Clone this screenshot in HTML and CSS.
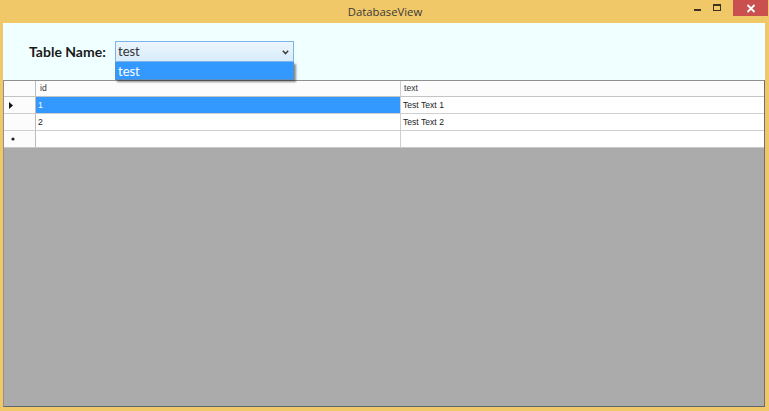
FILE: index.html
```html
<!DOCTYPE html>
<html>
<head>
<meta charset="utf-8">
<link rel="stylesheet" href="styles.css">
</head>
<body>
<div class="window">
  <div class="titlebar">
    <div class="title">DatabaseView</div>
    <div class="controls">
      <div class="btn-min"><span class="min-bar"></span></div>
      <div class="btn-max"><span class="max-box"></span></div>
      <div class="btn-close">
        <svg width="10" height="9" viewBox="0 0 10 9"><path d="M1.5 1 L8.5 8 M8.5 1 L1.5 8" stroke="#fff" stroke-width="1.8"/></svg>
      </div>
    </div>
  </div>
  <div class="client">
    <div class="toolbar">
      <span class="label">Table Name:</span>
      <div class="combo-wrap">
        <div class="combo">
          <span class="combo-text">test</span>
          <svg class="chev" width="7" height="5" viewBox="0 0 7 5"><path d="M0.8 0.8 L3.5 3.6 L6.2 0.8" stroke="#404040" stroke-width="1.5" fill="none"/></svg>
        </div>
        <div class="droplist"><span class="drop-item">test</span></div>
      </div>
    </div>
    <div class="grid">
      <div class="rows">
        <div class="cell rh hdr"></div>
        <div class="cell hdr ch1">id</div>
        <div class="cell hdr ch2">text</div>

        <div class="cell rh"><svg width="4" height="7" viewBox="0 0 4 7"><path d="M0 0 L4 3.5 L0 7 Z" fill="#111"/></svg></div>
        <div class="cell sel">1</div>
        <div class="cell">Test Text 1</div>

        <div class="cell rh"></div>
        <div class="cell">2</div>
        <div class="cell">Test Text 2</div>

        <div class="cell rh last"><svg class="star" width="4" height="4" viewBox="0 0 4 4"><circle cx="2" cy="2" r="1.6" fill="#222"/></svg></div>
        <div class="cell last"></div>
        <div class="cell last"></div>
      </div>
    </div>
  </div>
</div>
</body>
</html>
```

FILE: styles.css
```css
* { box-sizing: border-box; }
html, body { margin: 0; padding: 0; }
body { width: 769px; height: 411px; overflow: hidden; background: #f1c868; }

.window {
  width: 769px;
  height: 411px;
  display: flex;
  flex-direction: column;
  background: #f1c868;
  padding: 0 4px 4px 3px;
}

.titlebar {
  height: 23px;
  flex: none;
  position: relative;
  display: flex;
  justify-content: center;
}
.title {
  font-family: "Open Sans", "Noto Sans", sans-serif;
  font-size: 11.3px;
  color: #3a3a3a;
  line-height: 23px;
  padding-left: 2px;
}
.controls {
  position: absolute;
  right: -3px;
  top: 0;
  display: flex;
  align-items: flex-start;
}
.btn-min {
  width: 20px;
  height: 15px;
  display: flex;
  justify-content: center;
  margin-right: 0;
}
.min-bar {
  display: block;
  width: 7px;
  height: 2px;
  background: #3b3220;
  margin-top: 9px;
}
.btn-max {
  width: 20px;
  height: 15px;
  display: flex;
  justify-content: center;
  margin-right: 6px;
}
.max-box {
  display: block;
  width: 8px;
  height: 7px;
  border: 1px solid #3b3220;
  border-top-width: 2px;
  margin-top: 4px;
}
.btn-close {
  width: 35px;
  height: 16px;
  background: #c9504f;
  display: flex;
  align-items: center;
  justify-content: center;
}

.client {
  flex: 1;
  display: flex;
  flex-direction: column;
  background: #f0ffff;
}

.toolbar {
  height: 57px;
  flex: none;
  display: flex;
  align-items: flex-start;
  padding: 18px 0 0 26px;
}
.label {
  font-family: Lato, "Open Sans", sans-serif;
  font-weight: bold;
  font-size: 14px;
  color: #1a1a1a;
  line-height: 21px;
  margin-top: 0;
  width: 86px;
}
.combo-wrap {
  position: relative;
  width: 179px;
  height: 21px;
}
.combo {
  width: 179px;
  height: 21px;
  border: 1px solid #7eb4ea;
  background: linear-gradient(#ecf6fd, #d8ecfa);
  display: flex;
  align-items: center;
  justify-content: space-between;
  padding: 0 4px 0 2px;
}
.combo-text {
  font-family: Lato, "Open Sans", sans-serif;
  font-size: 13px;
  color: #333;
  line-height: 19px;
  margin-top: -1px;
}
.chev { margin-top: 1px; }
.droplist {
  position: absolute;
  left: 0;
  top: 21px;
  width: 179px;
  height: 18px;
  background: #3399ff;
  border: 1px solid #5a8fc8;
  border-top: none;
  box-shadow: 2px 2px 2px rgba(0, 0, 0, 0.45);
  z-index: 2;
  padding-left: 2px;
}
.drop-item {
  font-family: Lato, "Open Sans", sans-serif;
  font-size: 13px;
  color: #fff;
  line-height: 16px;
}

.grid {
  flex: 1;
  background: #ababab;
  border: 1px solid #8f8f8f;
  border-bottom-color: #5f6670;
  border-right-color: #6e7070;
}
.rows {
  display: grid;
  grid-template-columns: 32px 365px 1fr;
  grid-auto-rows: 17px;
  grid-template-rows: 16px;
  background: #fff;
}
.cell {
  font-family: "Liberation Sans", Arial, sans-serif;
  font-size: 8.6px;
  color: #222;
  border-right: 1px solid #cfcfcf;
  border-bottom: 1px solid #cfcfcf;
  padding-left: 2px;
  line-height: 16px;
  white-space: nowrap;
  overflow: hidden;
  background: #fff;
}
.cell:nth-child(3n) { border-right: none; }
.hdr {
  background: #fcfcfc;
  line-height: 15px;
  color: #333;
  border-bottom-color: #c4c4c4;
}
.ch1 { padding-left: 4px; }
.ch2 { padding-left: 3px; }
.rh {
  background: #fcfcfc;
  border-right-color: #bdbdbd;
  display: flex;
  align-items: center;
  padding-left: 5px;
}
.rh .star { margin-left: 2px; }
.sel {
  background: #3399ff;
  color: #fff;
}
.last { border-bottom-color: #c8c8c8; }
```
